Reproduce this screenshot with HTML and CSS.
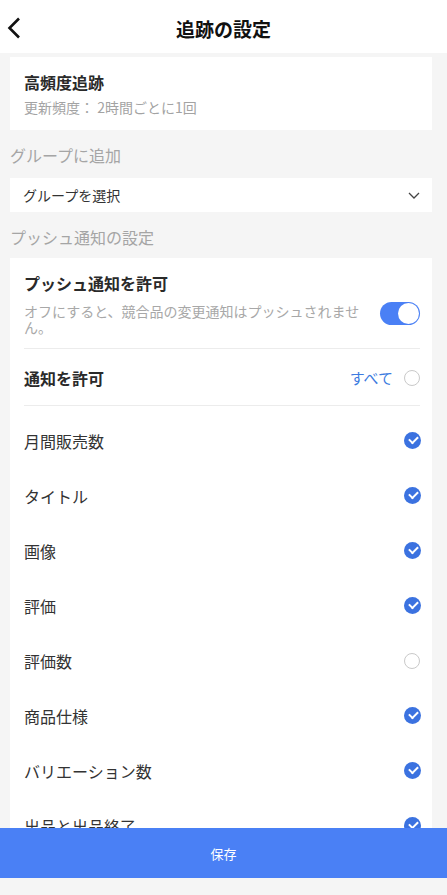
FILE: index.html
```html
<!DOCTYPE html>
<html lang="ja">
<head>
  <meta charset="UTF-8">
  <meta name="viewport" content="width=device-width, initial-scale=1.0">
  <title>追跡の設定</title>
  <link rel="stylesheet" href="styles.css">
</head>
<body>
  <div class="page">
    <header class="topbar">
      <svg class="back" width="14" height="22" viewBox="0 0 14 22">
        <path d="M12 1.5 L2.5 11 L12 20.5" fill="none" stroke="#111" stroke-width="2.6"/>
      </svg>
      <h1>追跡の設定</h1>
    </header>

    <div class="scroll">
      <div class="card freq">
        <p class="title">高頻度追跡</p>
        <p class="sub">更新頻度： 2時間ごとに1回</p>
      </div>

      <p class="label">グループに追加</p>
      <div class="select">
        <span>グループを選択</span>
        <svg width="12" height="7" viewBox="0 0 12 7">
          <path d="M1 1 L6 6 L11 1" fill="none" stroke="#444" stroke-width="1.3"/>
        </svg>
      </div>

      <p class="label">プッシュ通知の設定</p>
      <div class="card push">
        <div class="push-head">
          <p class="title">プッシュ通知を許可</p>
          <div class="push-row">
            <p class="desc">オフにすると、競合品の変更通知はプッシュされません。</p>
            <div class="toggle"><span class="knob"></span></div>
          </div>
        </div>

        <div class="all-row">
          <p class="title">通知を許可</p>
          <div class="all-right">
            <span class="all-link">すべて</span>
            <span class="radio"></span>
          </div>
        </div>

        <ul class="items">
          <li><span>月間販売数</span><span class="check"></span></li>
          <li><span>タイトル</span><span class="check"></span></li>
          <li><span>画像</span><span class="check"></span></li>
          <li><span>評価</span><span class="check"></span></li>
          <li><span>評価数</span><span class="radio"></span></li>
          <li><span>商品仕様</span><span class="check"></span></li>
          <li><span>バリエーション数</span><span class="check"></span></li>
          <li><span>出品と出品終了</span><span class="check"></span></li>
        </ul>
      </div>
    </div>

    <button class="save">保存</button>
    <div class="bottom"></div>
  </div>
</body>
</html>
```

FILE: styles.css
```css
* {
  box-sizing: border-box;
}
body {
  margin: 0;
  background: #f5f5f5;
  font-family: "Noto Sans CJK JP", "Noto Sans", sans-serif;
  color: #333;
}
p {
  margin: 0;
}
.page {
  height: 100vh;
  display: flex;
  flex-direction: column;
}
.topbar {
  height: 53px;
  flex-shrink: 0;
  background: #fff;
  display: flex;
  align-items: center;
  justify-content: center;
  position: relative;
}
.topbar .back {
  position: absolute;
  left: 7px;
  top: 17px;
}
.topbar h1 {
  margin: 0;
  font-size: 19px;
  font-weight: 700;
  color: #111;
  line-height: 26px;
  margin-top: 4px;
}
.scroll {
  flex: 1;
  overflow: hidden;
  padding: 4px 15px 0 10px;
}
.card {
  background: #fff;
}
.title {
  font-size: 16px;
  line-height: 22px;
  font-weight: 700;
  color: #2a2a2a;
}
.freq {
  padding: 14px 14px 13px;
}
.freq .sub {
  margin-top: 4px;
  font-size: 14px;
  line-height: 20px;
  color: #a3a3a3;
}
.label {
  font-size: 16px;
  line-height: 22px;
  color: #a5a5a5;
  margin: 14px 0 0;
}
.select {
  margin-top: 12px;
  height: 34px;
  background: #fff;
  display: flex;
  align-items: center;
  justify-content: space-between;
  padding: 0 12px 0 13px;
  font-size: 14px;
  color: #333;
}
.push {
  margin-top: 10px;
  padding: 0 12px 0 14px;
}
.push-head {
  padding: 14px 0 13px;
  border-bottom: 1px solid #ececec;
}
.push-row {
  display: flex;
  align-items: flex-start;
  justify-content: space-between;
  margin-top: 9px;
}
.desc {
  width: 342px;
  font-size: 14px;
  line-height: 16px;
  color: #a8a8a8;
}
.toggle {
  width: 40px;
  height: 23px;
  margin-top: -1px;
  border-radius: 12px;
  background: #4a80f5;
  position: relative;
}
.knob {
  position: absolute;
  right: 1px;
  top: 1px;
  width: 21px;
  height: 21px;
  border-radius: 50%;
  background: #fff;
}
.all-row {
  height: 57px;
  display: flex;
  align-items: center;
  justify-content: space-between;
  border-bottom: 1px solid #ececec;
  padding-top: 1px;
}
.all-right {
  display: flex;
  align-items: center;
  gap: 11px;
}
.all-link {
  font-size: 15px;
  color: #3d7be0;
}
.radio {
  width: 16px;
  height: 16px;
  border-radius: 50%;
  border: 1px solid #c9c9c9;
  flex-shrink: 0;
}
.items {
  list-style: none;
  margin: 0;
  padding: 7px 0 0;
}
.items li {
  height: 55px;
  display: flex;
  align-items: center;
  justify-content: space-between;
  font-size: 16px;
  color: #333;
}
.check {
  width: 17px;
  height: 17px;
  margin-right: -1px;
  border-radius: 50%;
  background: #3b72e0;
  position: relative;
  flex-shrink: 0;
}
.check::after {
  content: "";
  position: absolute;
  left: 5px;
  top: 4px;
  width: 7px;
  height: 4px;
  border-left: 2px solid #fff;
  border-bottom: 2px solid #fff;
  transform: rotate(-45deg);
}
.save {
  height: 50px;
  flex-shrink: 0;
  border: none;
  background: #4a80f5;
  color: #fff;
  font-family: inherit;
  font-size: 13px;
}
.bottom {
  height: 17px;
  flex-shrink: 0;
  background: #f5f5f5;
}
```
